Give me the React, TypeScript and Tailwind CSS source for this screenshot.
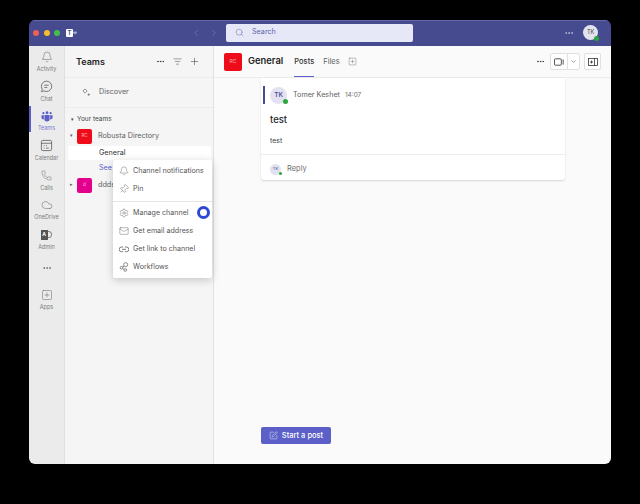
import React from "react";
import { Bell, Cloud, Phone, Plus, Search, ChevronLeft, ChevronRight, ChevronDown, Ellipsis, ListFilter, Pin, Settings, Mail, SquarePlus, SquarePen } from "lucide-react";

const font = { fontFamily: "Inter, 'Liberation Sans', sans-serif" };

function TeamsGlyph({ className = "" }: { className?: string }) {
  return (
    <svg viewBox="0 0 16 14" className={className} fill="currentColor">
      <circle cx="3.2" cy="2.6" r="1.5" />
      <circle cx="8" cy="2" r="1.9" />
      <circle cx="12.8" cy="2.6" r="1.5" />
      <path d="M.6 5.4h3.2v5.4c-2 .3-3.2-1-3.2-2.4z" />
      <path d="M12.2 5.4h3.2v3c0 1.4-1.2 2.7-3.2 2.4z" />
      <path d="M4.6 5h6.8v5.6c0 1.8-1.4 3-3.4 3s-3.4-1.2-3.4-3z" />
    </svg>
  );
}

function ChatIcon() {
  return (
    <svg viewBox="0 0 14 14" className="h-[13px] w-[13px]" fill="none" stroke="currentColor" strokeWidth="0.9">
      <path d="M7 1.2a5.6 5.6 0 1 1-2.7 10.5L1.6 12.6l.8-2.7A5.6 5.6 0 0 1 7 1.2z" />
      <path d="M4.6 5.6h4.8M4.6 8h3.2" />
    </svg>
  );
}

function CalendarIcon() {
  return (
    <svg viewBox="0 0 14 14" className="h-[13px] w-[13px]" fill="none" stroke="currentColor" strokeWidth="0.9">
      <rect x="1.5" y="1.5" width="11" height="11" rx="1.5" />
      <path d="M1.5 4.6h11" />
      <path d="M4 7.2h1M6.5 7.2h1M4 9.8h1M6.5 9.8h3" />
    </svg>
  );
}

function DiscoverIcon() {
  return (
    <svg viewBox="0 0 12 12" className="h-[9px] w-[9px]" fill="none" stroke="currentColor" strokeWidth="0.9">
      <path d="M4 1.2 6.8 4 4 6.8 1.2 4z" />
      <path d="M9 7.2v3.2M7.4 8.8h3.2" />
    </svg>
  );
}

function LinkIcon() {
  return (
    <svg viewBox="0 0 12 8" className="h-[7px] w-[10px]" fill="none" stroke="currentColor" strokeWidth="0.9">
      <path d="M5 1H3a2.6 2.6 0 0 0 0 5.6h2M7 1h2a2.6 2.6 0 0 1 0 5.6H7M3.6 3.8h4.8" />
    </svg>
  );
}

function WorkflowIcon() {
  return (
    <svg viewBox="0 0 12 12" className="h-[10px] w-[10px]" fill="none" stroke="currentColor" strokeWidth="0.8">
      <circle cx="8" cy="3.2" r="2.4" />
      <circle cx="3" cy="6.8" r="1.6" />
      <circle cx="7.5" cy="9.6" r="1.6" />
      <path d="M4.4 6 6 5M4.4 7.6 6 8.8" />
    </svg>
  );
}

function RailItem({ icon, label, active }: { icon: React.ReactNode; label: string; active?: boolean }) {
  return (
    <div className={`relative flex h-[29.7px] w-full flex-col items-center justify-center ${active ? "text-[#5b5fc7]" : "text-[#616161]"}`}>
      {active && <div className="absolute left-0 top-[1px] h-[26px] w-[1.5px] bg-[#5b5fc7]" />}
      <div className="flex h-[16px] items-center justify-center">{icon}</div>
      <span className="text-[5.5px] leading-[8px] opacity-80">{label}</span>
    </div>
  );
}

function MenuItem({ icon, label }: { icon: React.ReactNode; label: string }) {
  return (
    <div className="flex h-[18px] items-center gap-[4px] pl-[6px] text-[#555]">
      <span className="flex w-[10px] justify-center">{icon}</span>
      <span className="text-[7.1px]">{label}</span>
    </div>
  );
}

export default function App() {
  const s = { size: 10, strokeWidth: 1 };
  return (
    <div style={font} className="relative flex h-[504px] w-[640px] bg-black px-[29px] pb-[40px] pt-[20px]">
      <div className="flex min-w-0 flex-1 flex-col overflow-hidden rounded-[6px]">
        {/* Title bar */}
        <div className="flex h-[26px] shrink-0 items-center border-t border-[#6468a8] bg-[#464a8f] pb-[2px] pl-[4px] pr-[13px]">
          <div className="flex items-center gap-[4.5px]">
            <span className="h-[6px] w-[6px] rounded-full bg-[#ee5f57]" />
            <span className="h-[6px] w-[6px] rounded-full bg-[#f6bd2e]" />
            <span className="h-[6px] w-[6px] rounded-full bg-[#3fc24a]" />
          </div>
          <div className="ml-[6px] flex items-center">
            <div className="flex h-[8px] w-[7px] items-center justify-center rounded-[1px] bg-white text-[6px] font-bold leading-none text-[#464a8f]">T</div>
            <TeamsGlyph className="h-[9px] w-[4px] text-[#b9bbe0]" />
          </div>
          <div className="ml-[114px] flex items-center gap-[8px] text-[#8f92c4]">
            <ChevronLeft size={10} strokeWidth={1.2} />
            <ChevronRight size={10} strokeWidth={1.2} />
          </div>
          <div className="ml-[7px] flex h-[18px] w-[187px] items-center rounded-[2px] bg-[#e7e8f7] pl-[9px] text-[#5d60a8]">
            <Search size={9} strokeWidth={1.2} />
            <span className="ml-[8px] text-[7.2px]">Search</span>
          </div>
          <Ellipsis size={10} className="ml-auto text-[#c5c7e6]" />
          <div className="relative ml-[9px] flex h-[15px] w-[15px] items-center justify-center rounded-full bg-[#e2e2ee] text-[5.5px] text-[#444]">
            TK
            <span className="absolute -bottom-[1px] -right-[1px] h-[5px] w-[5px] rounded-full bg-[#2aa63c]" />
          </div>
        </div>
        <div className="flex min-h-0 flex-1">
          {/* Rail */}
          <div className="flex w-[36px] shrink-0 flex-col items-center border-r border-[#e0e0e0] bg-[#ebebeb]">
            <RailItem icon={<Bell size={12} strokeWidth={1} />} label="Activity" />
            <RailItem icon={<ChatIcon />} label="Chat" />
            <RailItem active icon={<TeamsGlyph className="h-[11px] w-[12px]" />} label="Teams" />
            <RailItem icon={<CalendarIcon />} label="Calendar" />
            <RailItem icon={<Phone size={11} strokeWidth={1} />} label="Calls" />
            <RailItem icon={<Cloud size={12} strokeWidth={1} />} label="OneDrive" />
            <RailItem
              icon={
                <div className="flex h-[10px] w-[12px] items-center">
                  <span className="flex h-[10px] w-[7px] items-center justify-center bg-[#555] text-[5px] font-bold text-white">A</span>
                  <span className="h-[7px] w-[4px] rounded-r-full border border-l-0 border-[#888]" />
                </div>
              }
              label="Admin"
            />
            <div className="flex h-[28px] items-center text-[#666]">
              <Ellipsis size={10} />
            </div>
            <div className="mt-[2px] w-full">
              <RailItem icon={<SquarePlus size={12} strokeWidth={1} />} label="Apps" />
            </div>
          </div>
          {/* Sidebar */}
          <div className="flex w-[149px] shrink-0 flex-col border-r border-[#e2e2e2] bg-[#f5f5f5]">
            <div className="flex h-[32px] shrink-0 items-center border-b border-[#ececec] pl-[11px] pr-[13px] text-[#333]">
              <span className="text-[9px] font-semibold text-[#242424]">Teams</span>
              <Ellipsis size={9} className="ml-auto" />
              <ListFilter size={9} strokeWidth={1.2} className="ml-[8px]" />
              <Plus size={11} strokeWidth={1.1} className="ml-[7px]" />
            </div>
            <div className="flex h-[30px] shrink-0 items-center border-b border-[#ececec] pl-[17px] text-[#616161]">
              <DiscoverIcon />
              <span className="ml-[8px] text-[7.2px]">Discover</span>
            </div>
            <div className="mt-[6px] flex h-[12px] items-center pl-[6px] text-[#444]">
              <span className="text-[5px]">▾</span>
              <span className="ml-[3px] text-[6.5px]">Your teams</span>
            </div>
            <div className="flex h-[20px] items-center pl-[5px] text-[#616161]">
              <span className="text-[5px]">▾</span>
              <span className="ml-[4px] flex h-[15px] w-[15px] items-center justify-center rounded-[2px] bg-[#ee0c1a] text-[4.5px] text-[#f7b0b0]">RC</span>
              <span className="ml-[6px] text-[7.2px]">Robusta Directory</span>
            </div>
            <div className="ml-[3px] mr-[2px] flex h-[14px] items-center rounded-[1px] bg-white pl-[31px] text-[7.2px] text-[#333]">General</div>
            <div className="flex h-[16px] items-center pl-[34px] text-[7.2px] text-[#5b5fc7]">See</div>
            <div className="flex h-[18px] items-center pl-[5px] text-[#616161]">
              <span className="text-[5px]">▸</span>
              <span className="ml-[4px] flex h-[15px] w-[15px] items-center justify-center rounded-[2px] bg-[#e3008c] text-[4.5px] text-[#f9c0e0]">d</span>
              <span className="ml-[6px] text-[7.2px]">ddds</span>
            </div>
          </div>
          {/* Main */}
          <div className="flex min-w-0 flex-1 flex-col bg-[#fafafa]">
            <div className="flex h-[32px] shrink-0 items-center border-b border-[#ececec] pl-[10px] pr-[10px]">
              <span className="flex h-[18px] w-[18px] items-center justify-center rounded-[2px] bg-[#ee0c1a] text-[5px] text-[#f7b0b0]">RC</span>
              <span className="ml-[6px] text-[9.4px] font-semibold text-[#242424]">General</span>
              <div className="relative ml-[11px] flex h-full items-center text-[7.5px] font-medium text-[#333]">
                Posts
                <span className="absolute bottom-0 left-0 h-[1.5px] w-full bg-[#5b5fc7]" />
              </div>
              <span className="ml-[9px] text-[7.5px] text-[#616161]">Files</span>
              <SquarePlus size={9} strokeWidth={1} className="ml-[8px] text-[#555]" />
              <Ellipsis size={9} className="ml-auto text-[#333]" />
              <div className="ml-[5px] flex h-[17px] items-center rounded-[2px] border border-[#e0e0e0] bg-white">
                <span className="flex w-[16px] justify-center text-[#333]">
                  <svg viewBox="0 0 12 8" className="h-[8px] w-[11px]" fill="none" stroke="currentColor" strokeWidth="0.9">
                    <rect x="0.5" y="0.5" width="7.5" height="7" rx="1.2" />
                    <path d="M10 1.2v5.6" />
                  </svg>
                </span>
                <span className="flex h-full w-[12px] items-center justify-center border-l border-[#e0e0e0] text-[#555]"><ChevronDown size={7} /></span>
              </div>
              <div className="ml-[4px] flex h-[17px] w-[17px] items-center justify-center rounded-[2px] border border-[#e0e0e0] bg-white text-[#333]">
                <svg viewBox="0 0 10 8" className="h-[8px] w-[10px]" fill="none" stroke="currentColor" strokeWidth="0.8">
                  <rect x="0.5" y="0.5" width="9" height="7" />
                  <path d="M6.5 .5v7M2 4h3M3.5 2.5v3" />
                </svg>
              </div>
            </div>
            <div className="flex min-h-0 flex-1 flex-col pl-[47px] pr-[46px]">
              <div className="rounded-b-[3px] bg-white shadow-[0_1px_2px_rgba(0,0,0,0.15)]">
                <div className="relative flex h-[33px] items-center pl-[9px] pt-[2px]">
                  <span className="absolute left-[2px] top-[8px] h-[18px] w-[2px] bg-[#464a8f]" />
                  <div className="relative flex h-[17px] w-[17px] items-center justify-center rounded-full bg-[#e2e1ef] text-[6.5px] font-medium text-[#444791]">
                    TK
                    <span className="absolute bottom-0 right-[-1px] h-[5px] w-[5px] rounded-full bg-[#2aa63c]" />
                  </div>
                  <span className="ml-[6px] text-[7.2px] text-[#616161]">Tomer Keshet</span>
                  <span className="ml-[5px] text-[6.5px] text-[#707070]">14:07</span>
                </div>
                <div className="pl-[9px] pt-[3px] text-[9.5px] font-medium leading-[12px] text-[#242424]">test</div>
                <div className="pl-[9px] pt-[10px] text-[7px] leading-[9px] text-[#424242]">test</div>
                <div className="mt-[9px] flex h-[26px] items-center border-t border-[#ececec] pl-[9px] pt-[3px]">
                  <div className="relative flex h-[11px] w-[11px] items-center justify-center rounded-full bg-[#e2e1ef] text-[4px] text-[#444791]">
                    TK
                    <span className="absolute bottom-0 right-[-1px] h-[3px] w-[3px] rounded-full bg-[#2aa63c]" />
                  </div>
                  <span className="ml-[6px] text-[7.5px] text-[#707070]">Reply</span>
                </div>
              </div>
              <div className="mt-auto mb-[20px] flex h-[17px] w-[70px] items-center justify-center gap-[4px] rounded-[2px] bg-[#5b5fc7] text-white">
                <SquarePen size={9} strokeWidth={1.2} />
                <span className="text-[7.5px] font-medium">Start a post</span>
              </div>
            </div>
          </div>
        </div>
      </div>
      {/* Context menu */}
      <div className="absolute left-[113px] top-[160px] flex h-[118px] w-[99px] flex-col rounded-[2px] bg-white py-[2px] shadow-[0_2px_8px_rgba(0,0,0,0.2)]">
        <MenuItem icon={<Bell {...s} />} label="Channel notifications" />
        <MenuItem icon={<Pin {...s} className="rotate-45" />} label="Pin" />
        <div className="my-[2.5px] h-px bg-[#e5e5e5]" />
        <MenuItem icon={<Settings {...s} />} label="Manage channel" />
        <MenuItem icon={<Mail {...s} />} label="Get email address" />
        <MenuItem icon={<LinkIcon />} label="Get link to channel" />
        <MenuItem icon={<WorkflowIcon />} label="Workflows" />
      </div>
      <div className="absolute left-[197px] top-[206px] h-[13px] w-[13px] rounded-full border-[3px] border-[#2f47d6] bg-white" />
    </div>
  );
}
